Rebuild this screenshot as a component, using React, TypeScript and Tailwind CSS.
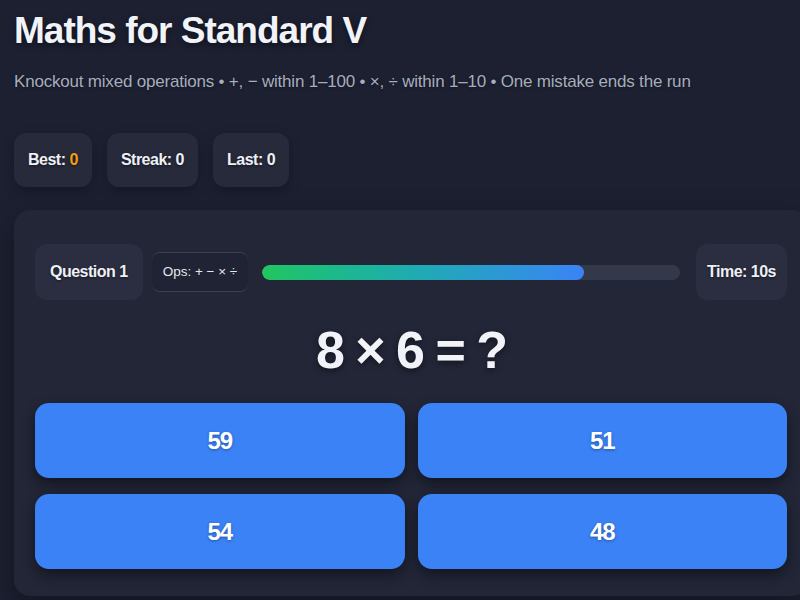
import React from "react";

const answers = [59, 51, 54, 48];

function StatPill({ label, value, accent }: { label: string; value: number; accent?: boolean }) {
  return (
    <div className="flex h-[54px] items-center rounded-xl bg-[#262a3b] px-[14px] text-[16px] font-bold tracking-[-0.5px] text-[#eef0f5] shadow-[0_4px_12px_rgba(0,0,0,0.25)] [text-shadow:0_1px_3px_rgba(0,0,0,0.5)]">
      {label}:&nbsp;<span className={accent ? "text-[#f59e0b]" : ""}>{value}</span>
    </div>
  );
}

export default function App() {
  const progress = 77;

  return (
    <div
      className="h-[600px] w-[800px] overflow-hidden bg-[#1c2031] text-white"
      style={{ fontFamily: '"Liberation Sans", Arial, sans-serif' }}
    >
      <div className="w-[808px] pl-[14px] pt-[9px]">
        <h1 className="text-[37px] font-extrabold leading-[44px] tracking-[-1px] text-[#f1f3f8] [text-shadow:0_2px_6px_rgba(0,0,0,0.5)]">
          Maths for Standard V
        </h1>
        <p className="mt-[18px] text-[17px] leading-[22px] tracking-[-0.2px] text-[#a7adbc] [text-shadow:0_1px_3px_rgba(0,0,0,0.4)]">
          Knockout mixed operations • +, − within 1–100 • ×, ÷ within 1–10 • One mistake ends the run
        </p>

        {/* Stats */}
        <div className="mt-[40px] flex gap-[15px]">
          <StatPill label="Best" value={0} accent />
          <StatPill label="Streak" value={0} />
          <StatPill label="Last" value={0} />
        </div>

        {/* Game card */}
        <div className="mt-[23px] h-[386px] rounded-2xl bg-[#222637] px-[21px] pt-[34px] shadow-[0_10px_30px_rgba(0,0,0,0.35)]">
          <div className="flex items-center">
            <div className="flex h-[56px] items-center rounded-xl bg-[#2a2e40] px-[15px] text-[16px] font-bold tracking-[-0.5px] text-[#eef0f5] [text-shadow:0_1px_3px_rgba(0,0,0,0.5)]">
              Question 1
            </div>
            <div className="ml-[9px] flex h-[40px] items-center rounded-lg border-y border-[#3a3f52] bg-[#1f2333] px-[11px] text-[13.5px] text-[#e6e8ee]">
              Ops: + − × ÷
            </div>
            <div className="ml-[14px] h-[15px] flex-1 overflow-hidden rounded-full bg-[#33394a]">
              <div
                className="h-full rounded-full bg-gradient-to-r from-[#22c55e] to-[#3b82f6]"
                style={{ width: `${progress}%` }}
              />
            </div>
            <div className="ml-[16px] flex h-[56px] items-center rounded-xl bg-[#2a2e40] px-[11px] text-[16px] font-bold tracking-[-0.5px] text-[#eef0f5] [text-shadow:0_1px_3px_rgba(0,0,0,0.5)]">
              Time: 10s
            </div>
          </div>

          <div className="mt-[22px] text-center text-[52px] font-extrabold leading-[56px] tracking-[-2px] text-[#f1f3f8] [text-shadow:0_2px_6px_rgba(0,0,0,0.5)]">
            8 × 6 = ?
          </div>

          <div className="mt-[25px] grid grid-cols-2 gap-x-[13px] gap-y-[16px]">
            {answers.map((a) => (
              <button
                key={a}
                className="flex h-[75px] items-center justify-center rounded-[14px] bg-[#3b82f6] text-[24px] font-bold tracking-[-1px] text-white shadow-[0_6px_14px_rgba(0,0,0,0.45)] [text-shadow:0_1px_3px_rgba(0,0,0,0.35)]"
              >
                {a}
              </button>
            ))}
          </div>
        </div>
      </div>
    </div>
  );
}
